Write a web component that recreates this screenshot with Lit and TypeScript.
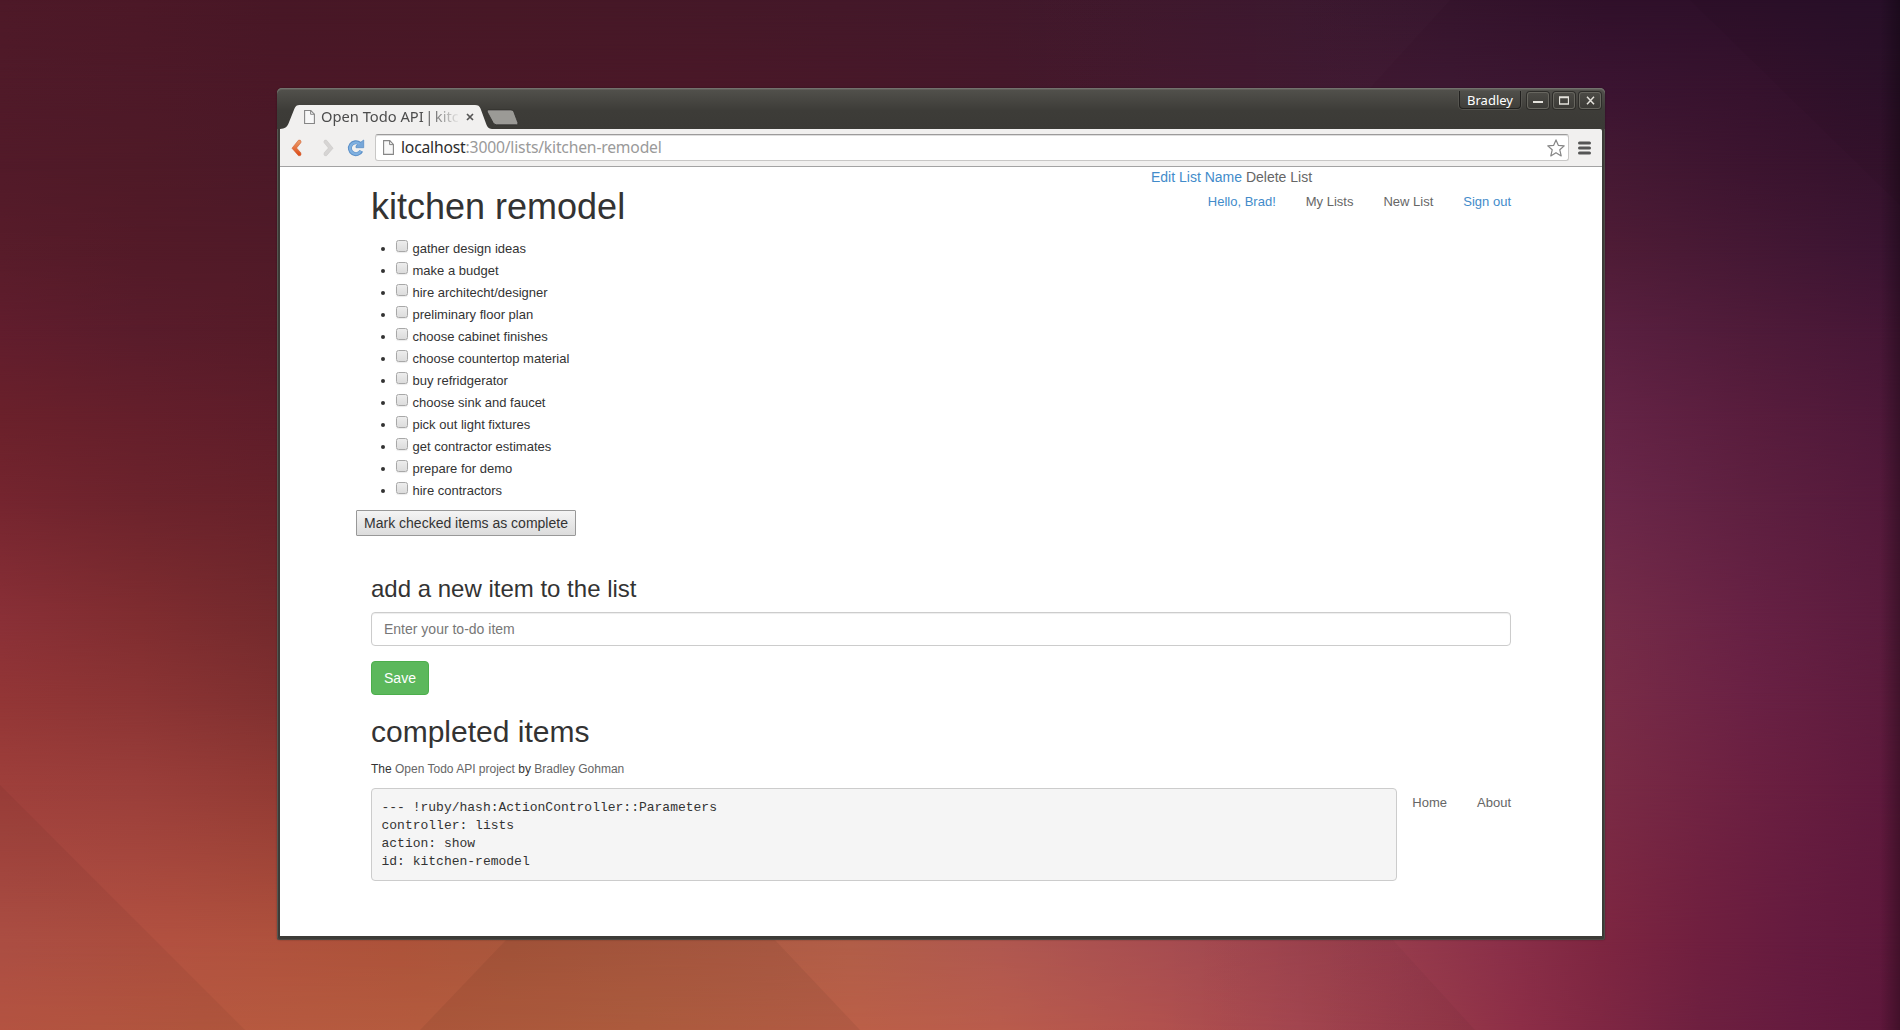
import { LitElement, html, svg, css } from "lit";
import { customElement, state } from "lit/decorators.js";

type Stop = [number, string];

const WIDTH = 1900;

/** Rows of the wallpaper: each is a horizontal gradient, blended vertically into the next. */
const WALL: { y: number; stops: Stop[] }[] = [
  { y: 0, stops: [[0, "#4e1928"], [140, "#4c1827"], [276, "#481726"], [500, "#471826"], [950, "#43182a"], [1300, "#3b172e"], [1450, "#35142c"], [1607, "#30102a"], [1750, "#2d102a"], [1890, "#29102a"]] },
  { y: 88, stops: [[0, "#501a29"], [276, "#4b1827"], [700, "#4a1828"], [1000, "#45182a"], [1300, "#401830"], [1450, "#3d1832"], [1607, "#3b1431"], [1750, "#36122d"], [1890, "#2e112b"]] },
  { y: 164, stops: [[0, "#521a29"], [140, "#4f1a27"], [276, "#4c1928"], [1607, "#451933"], [1750, "#3c142f"], [1890, "#34122c"]] },
  { y: 250, stops: [[0, "#581c2a"], [140, "#531a28"], [276, "#501a28"], [1607, "#4f1c36"], [1750, "#451834"], [1890, "#3b1432"]] },
  { y: 330, stops: [[0, "#611d2d"], [140, "#591c2b"], [276, "#561b28"], [1607, "#5a2040"], [1750, "#4f1b39"], [1890, "#461636"]] },
  { y: 420, stops: [[0, "#6b212b"], [140, "#651f2b"], [276, "#5f1d2a"], [1607, "#652446"], [1750, "#591d3d"], [1890, "#4e1839"]] },
  { y: 500, stops: [[0, "#75252f"], [140, "#6c232c"], [276, "#67212a"], [1607, "#6b2749"], [1750, "#5e2040"], [1890, "#54193b"]] },
  { y: 620, stops: [[0, "#8a3037"], [140, "#802d30"], [276, "#742a2d"], [1607, "#752c48"], [1750, "#672144"], [1890, "#5a1b3d"]] },
  { y: 700, stops: [[0, "#933636"], [140, "#8b3434"], [276, "#803030"], [1607, "#792c47"], [1750, "#6a2144"], [1890, "#5d1b3d"]] },
  { y: 785, stops: [[0, "#9e3f3b"], [140, "#9a3e3a"], [276, "#923a34"], [1607, "#7a2b45"], [1750, "#6c2041"], [1890, "#5f193d"]] },
  { y: 942, stops: [[0, "#b35246"], [170, "#b25140"], [400, "#ad533a"], [510, "#a9573c"], [770, "#af5c45"], [850, "#b15e48"], [1000, "#b05850"], [1200, "#a54b51"], [1400, "#963b4c"], [1500, "#8b3049"], [1600, "#7e2641"], [1700, "#701f3f"], [1800, "#651b3f"], [1890, "#5f183c"]] },
  { y: 1030, stops: [[0, "#bd5744"], [200, "#b75940"], [420, "#b45b3e"], [640, "#b66041"], [860, "#bb5f48"], [1000, "#b95c4c"], [1150, "#b2524e"], [1300, "#a54650"], [1450, "#953849"], [1520, "#8d2e47"], [1600, "#7f2743"], [1700, "#6e2040"], [1800, "#651b3f"], [1890, "#5e173b"]] },
];

@customElement("wall-paper")
class WallPaper extends LitElement {
  static styles = css`
    :host { display: block; width: 1900px; height: 1030px; }
    svg { display: block; }
  `;

  render() {
    return html`<svg width="1900" height="1030" viewBox="0 0 1900 1030">
      <defs>
        ${WALL.map((row, i) => svg`
          <linearGradient id=${"h" + i} gradientUnits="userSpaceOnUse" x1="0" y1="0" x2="1900" y2="0">
            ${row.stops.map(([x, c]) => svg`<stop offset=${x / WIDTH} stop-color=${c}></stop>`)}
          </linearGradient>
          ${i > 0 ? svg`
            <linearGradient id=${"v" + i} gradientUnits="userSpaceOnUse" x1="0" y1=${WALL[i - 1].y} x2="0" y2=${row.y}>
              <stop offset="0" stop-color="#fff" stop-opacity="0"></stop>
              <stop offset="1" stop-color="#fff"></stop>
            </linearGradient>
            <mask id=${"m" + i} maskUnits="userSpaceOnUse" x="0" y="0" width="1900" height="1030">
              <rect width="1900" height="1030" fill=${`url(#v${i})`}></rect>
            </mask>` : null}
        `)}
        <linearGradient id="edge" x1="0" x2="1" y1="0" y2="0">
          <stop offset="0" stop-color="#000" stop-opacity="0"></stop>
          <stop offset="1" stop-color="#000" stop-opacity=".3"></stop>
        </linearGradient>
        <linearGradient id="lift" x1="0" x2="1" y1="0" y2="0">
          <stop offset="0" stop-color="#fff" stop-opacity="0"></stop>
          <stop offset="1" stop-color="#fff" stop-opacity=".01"></stop>
        </linearGradient>
        <linearGradient id="dim" x1="0" x2="1" y1="0" y2="0">
          <stop offset="0" stop-color="#000" stop-opacity="0"></stop>
          <stop offset="1" stop-color="#000" stop-opacity=".04"></stop>
        </linearGradient>
      </defs>
      ${WALL.map((row, i) => svg`
        <rect width="1900" height="1030" fill=${`url(#h${i})`} mask=${i > 0 ? `url(#m${i})` : "none"}></rect>`)}
      <path d="M0 785 L245 1030 H0Z" fill="#000" opacity=".045"></path>
      <path d="M506 940 H775 L860 1030 H420Z" fill="#000" opacity=".05"></path>
      <path d="M1150 940 H1393 L1475 1030 H1150Z" fill="url(#dim)"></path>
      <path d="M950 0 H1450 L1370 88 H900Z" fill="url(#lift)"></path>
      <path d="M1690 0 L1900 205 V0Z" fill="#000" opacity=".03"></path>
      <rect x="1880" width="20" height="1030" fill="url(#edge)"></rect>
    </svg>`;
  }
}

const pageIcon = (w: number, h: number) => html`<svg width=${w} height=${h} viewBox="0 0 11 15" preserveAspectRatio="none">
  <path d="M.6 .6 H6.8 L10.4 4.4 V14.4 H.6Z" fill="#f8f8f8" stroke="#858585" stroke-width="1.1"></path>
  <path d="M6.6 .8 V4.6 H10.3" fill="none" stroke="#858585" stroke-width="1"></path>
</svg>`;

@customElement("browser-frame")
class BrowserFrame extends LitElement {
  static styles = css`
    :host {
      display: flex; flex-direction: column; box-sizing: border-box;
      width: 1328px; height: 852px; padding: 0 3px 4px;
      background: #3c3b37; border-radius: 6px 6px 3px 3px;
      box-shadow: inset 1px 0 #555650, inset -1px 0 #4c4b47, inset 0 -1px #4a4945, 0 0 2px rgba(0,0,0,.35);
      font-family: "Noto Sans", "Open Sans", sans-serif;
    }
    .strip {
      display: flex; justify-content: space-between; align-items: flex-start;
      height: 41px; margin: 0 -3px; padding: 0 3px;
      background: linear-gradient(#53524d, #3d3c38 55%, #3b3a36);
      border-radius: 5px 5px 0 0; box-shadow: inset 0 1px #73726d, inset 0 2px #5f5e59;
    }
    .tabs { display: flex; align-items: flex-start; padding-top: 17px; }
    .tab { position: relative; display: flex; align-items: center; width: 212px; height: 24px; box-sizing: border-box; padding-left: 24px; }
    .shape { position: absolute; left: 0; top: 0; }
    .tab .ico { position: relative; display: flex; }
    .title {
      position: relative; margin: 0 0 2px 6px; width: 137px; white-space: nowrap;
      font-size: 14.7px; line-height: 22px; color: #4c4c4c;
      -webkit-mask-image: linear-gradient(90deg, #000 76%, transparent 102%);
    }
    .pipe { margin: 0 -2.3px; }
    .x { position: relative; display: flex; margin-left: 8px; }
    .new { margin: 4px 0 0 -6px; display: flex; }
    .wm { display: flex; align-items: flex-start; padding-right: 1px; }
    .user {
      box-sizing: border-box; width: 62px; height: 18px; margin: 3px 6px 0 0;
      border: 1px solid #22211f; border-top: 0; border-radius: 0 0 4px 4px;
      box-shadow: 0 0 0 1px #55544f; color: #fff; font-size: 13px; line-height: 18px; text-align: center;
    }
    .wb {
      box-sizing: border-box; width: 22px; height: 17px; margin: 4px 4px 0 0; border-radius: 3px;
      border: 1px solid #67665f; background: linear-gradient(#4b4a45, #3c3b37);
      box-shadow: 0 0 0 1px #2e2d2a; display: flex; align-items: center; justify-content: center;
    }
    .wb:last-child { margin-right: 0; }
    .bar {
      display: flex; align-items: center; box-sizing: border-box; height: 38px;
      background: #f1f0ef; border-bottom: 1px solid #a3a3a3; padding: 0 9px 0 11px;
      border-radius: 0 2px 0 0;
    }
    .nav { display: flex; align-items: center; width: 84px; height: 36px; }
    .nav svg { display: block; }
    .fwd { margin-left: 21px; }
    .rel { margin-left: 13px; }
    .omni {
      flex: none; display: flex; align-items: center; box-sizing: border-box; width: 1194px; height: 27px;
      background: #fff; border: 1px solid #c8c7c6; border-top-color: #9c9b9b; border-radius: 3px;
      box-shadow: inset 0 1px #dedede; padding: 0 3.5px 0 7px;
    }
    .omni svg { display: block; flex: none; }
    .url { flex: 1; margin-left: 7px; font-size: 15.7px; letter-spacing: -.19px; line-height: 25px; color: #9a9a9a; white-space: nowrap; }
    .host { color: #2c2c2c; }
    .menu { margin-left: 9px; }
    .view { flex: 1; background: #fff; overflow: hidden; }
  `;

  render() {
    return html`
      <div class="strip">
        <div class="tabs">
          <div class="tab">
            <svg class="shape" width="212" height="24" viewBox="0 0 212 24">
              <path d="M0 24 C5 23.5 7 22 8.5 18.500 L14.500 3.500 C15.500 1 17 0 19.500 0 H195 C198 0 199.500 1 200.500 3.500 L206 18.500 C207.300 22 208.500 23.500 212 24Z" fill="#f1f0ef"></path>
            </svg>
            <span class="ico">${pageIcon(11, 14)}</span>
            <span class="title">Open Todo API <span class="pipe">|</span> kitc</span>
            <span class="x"><svg width="8" height="8" viewBox="0 0 8 8"><path d="M1 1 L7 7 M7 1 L1 7" stroke="#555" stroke-width="1.700"></path></svg></span>
          </div>
          <span class="new"><svg width="33" height="17" viewBox="0 0 33 17">
            <path d="M2.500 .9 H25 Q27 .9 27.800 2.800 L31.800 13.500 Q32.400 15.800 30.500 15.800 H10.500 Q8.500 15.800 7 13.500 L1.300 3 Q.7 .9 2.500 .9Z" fill="#9b9a96" stroke="#31302d" stroke-width=".8"></path>
          </svg></span>
        </div>
        <div class="wm">
          <div class="user">Bradley</div>
          <div class="wb"><svg width="10" height="9" viewBox="0 0 10 9"><path d="M0 6 H10" stroke="#e4e2dc" stroke-width="2"></path></svg></div>
          <div class="wb"><svg width="10" height="9" viewBox="0 0 10 9"><path d="M.5 1 H9.500 V8 H.5Z M.5 1.500 H9.500" fill="none" stroke="#e4e2dc" stroke-width="1.300"></path></svg></div>
          <div class="wb"><svg width="9" height="9" viewBox="0 0 9 9"><path d="M1 .8 L8 8.200 M8 .8 L1 8.200" stroke="#e4e2dc" stroke-width="1.500"></path></svg></div>
        </div>
      </div>
      <div class="bar">
        <div class="nav">
          <svg width="11" height="18" viewBox="0 0 11 18">
            <defs><linearGradient id="o" x2="0" y2="1"><stop stop-color="#eda06d"></stop><stop offset="1" stop-color="#dd4814"></stop></linearGradient></defs>
            <path d="M7.500 1.200 Q9.800 .6 10 2.500 L9.800 3.800 L5.500 9 L9.800 13.800 L10 15.400 Q9.800 17.300 7.500 16.700 L1 9.200Z" fill="url(#o)" stroke="#cf5a2c" stroke-width=".6"></path>
          </svg>
          <svg class="fwd" width="11" height="18" viewBox="0 0 11 18">
            <path d="M3.500 1.200 Q1.200 .6 1 2.500 L1.200 3.800 L5.500 9 L1.200 13.800 L1 15.400 Q1.200 17.300 3.500 16.700 L10 9.200Z" fill="#d6d4d3" stroke="#c8c6c5" stroke-width=".6"></path>
          </svg>
          <svg class="rel" width="18" height="18" viewBox="0 0 18 18">
            <path d="M14.300 11.800 A6 6 0 1 1 12.800 4.600" fill="none" stroke="#5b8fc7" stroke-width="4"></path>
            <path d="M16.700 1 V8.700 H9 V6.900 Z" fill="#76a6d8" stroke="#5b8fc7" stroke-width=".8"></path>
            <path d="M13.800 12 A5.700 5.700 0 1 1 12.600 5" fill="none" stroke="#7fb0e0" stroke-width="2.400"></path>
          </svg>
        </div>
        <div class="omni">
          ${pageIcon(11, 15)}
          <span class="url"><span class="host">localhost</span>:3000/lists/kitchen-remodel</span>
          <svg width="18" height="18" viewBox="0 0 18 18"><path d="M9 .9 L11.300 6.300 L17.200 6.900 L12.800 10.800 L14.200 16.900 L9 13.700 L3.800 16.900 L5.200 10.800 L.8 6.900 L6.700 6.300Z" fill="#fff" stroke="#858585" stroke-width="1.200" stroke-linejoin="round"></path></svg>
        </div>
        <svg class="menu" width="13" height="14" viewBox="0 0 13 14"><path d="M1.500 2 H11.500 M1.500 7 H11.500 M1.500 12 H11.500" stroke="#555" stroke-width="3" stroke-linecap="round"></path></svg>
      </div>
      <div class="view"><slot></slot></div>
    `;
  }
}

@customElement("todo-page")
class TodoPage extends LitElement {
  static styles = css`
    :host {
      display: block; width: 1170px; margin: 0 auto; color: #333;
      font-family: "Liberation Sans", Arial, sans-serif; font-size: 14px; line-height: 20px;
    }
    a { color: #666; text-decoration: none; }
    a.blue { color: #428bca; }
    .head { display: grid; grid-template-columns: 765px 375px; padding: 0 15px; }
    h1, h2, h3 { font-weight: 500; line-height: 1.1; margin: 0; }
    h1 { font-size: 36px; padding-top: 20px; }
    h2 { font-size: 30px; }
    h3 { font-size: 24px; }
    .side { padding-left: 15px; display: flex; flex-direction: column; }
    .links { display: flex; justify-content: flex-end; gap: 30px; font-size: 13px; margin-top: 5px; }
    .side { white-space: nowrap; }
    ul { list-style: none; margin: 9.400px 0 0; padding: 0 15px 0 25px; font-size: 13px; }
    li { display: flex; align-items: center; height: 22px; }
    .dot { width: 4px; height: 4px; border-radius: 50%; background: #333; margin: 4px 11px 0 0; }
    .box {
      appearance: none; box-sizing: border-box; width: 12px; height: 12px; margin: 0 4.500px 2px 0;
      border: 1px solid #a8a8a8; border-radius: 2.500px; background: linear-gradient(#ededed, #dcdcdc);
      box-shadow: 0 1px 1px rgba(0,0,0,.08);
    }
    .item { padding-top: 4px; }
    .mark {
      display: block; box-sizing: border-box; width: 220px; height: 26px; margin: 10px 0 0; padding: 0;
      font: 14px "Liberation Sans", Arial, sans-serif; color: #333; border: 1px solid #989898; border-radius: 1px;
      background: linear-gradient(#f4f4f4, #dcdcdc); white-space: nowrap;
    }
    .body { padding: 0 15px; }
    h3 { padding-top: 40px; }
    .field {
      display: block; box-sizing: border-box; width: 1140px; height: 34px; margin-top: 9.600px; padding: 6px 12px;
      border: 1px solid #ccc; border-radius: 4px; box-shadow: inset 0 1px 1px rgba(0,0,0,.075);
      font: 14px "Liberation Sans", Arial, sans-serif;
    }
    .field::placeholder { color: #777; opacity: 1; }
    .save {
      display: block; width: 58px; height: 34px; margin: 15px 0 20px; padding: 0; color: #fff;
      font: 14px "Liberation Sans", Arial, sans-serif; background: #5cb85c; border: 1px solid #4cae4c; border-radius: 4px;
    }
    .credit { margin: 12px 0 0; font-size: 12px; line-height: 18px; }
    .foot { display: flex; align-items: flex-start; justify-content: space-between; margin-top: 10px; }
    pre {
      box-sizing: border-box; width: 1026px; margin: 0; padding: 10px 9.500px 9px; border: 1px solid #ccc; border-radius: 4px;
      background: #f5f5f5; font: 13px/18px "Liberation Mono", monospace;
    }
    .foot .links { margin-top: 5px; }
  `;

  @state() private items = [
    "gather design ideas", "make a budget", "hire architecht/designer", "preliminary floor plan",
    "choose cabinet finishes", "choose countertop material", "buy refridgerator", "choose sink and faucet",
    "pick out light fixtures", "get contractor estimates", "prepare for demo", "hire contractors",
  ];

  render() {
    return html`
      <div class="head">
        <h1>kitchen remodel</h1>
        <div class="side">
          <div><a class="blue" href="#">Edit List Name</a> <a href="#">Delete List</a></div>
          <nav class="links">
            <a class="blue" href="#">Hello, Brad!</a><a href="#">My Lists</a><a href="#">New List</a><a class="blue" href="#">Sign out</a>
          </nav>
        </div>
      </div>
      <ul>
        ${this.items.map((t) => html`<li><span class="dot"></span><input class="box" type="checkbox"><span class="item">${t}</span></li>`)}
      </ul>
      <button class="mark">Mark checked items as complete</button>
      <div class="body">
        <h3>add a new item to the list</h3>
        <input class="field" placeholder="Enter your to-do item">
        <button class="save">Save</button>
        <h2>completed items</h2>
        <p class="credit">The <a href="#">Open Todo API project</a> by <a href="#">Bradley Gohman</a></p>
        <div class="foot">
          <pre>${"--- !ruby/hash:ActionController::Parameters\ncontroller: lists\naction: show\nid: kitchen-remodel"}</pre>
          <nav class="links"><a href="#">Home</a><a href="#">About</a></nav>
        </div>
      </div>
    `;
  }
}

@customElement("app-root")
class AppRoot extends LitElement {
  static styles = css`
    :host { display: grid; width: 1900px; height: 1030px; overflow: hidden; }
    .wall, .win { grid-area: 1 / 1; }
    .win { margin: 88px 0 0 277px; z-index: 1; }
  `;

  render() {
    return html`
      <wall-paper class="wall"></wall-paper>
      <browser-frame class="win"><todo-page></todo-page></browser-frame>
    `;
  }
}
